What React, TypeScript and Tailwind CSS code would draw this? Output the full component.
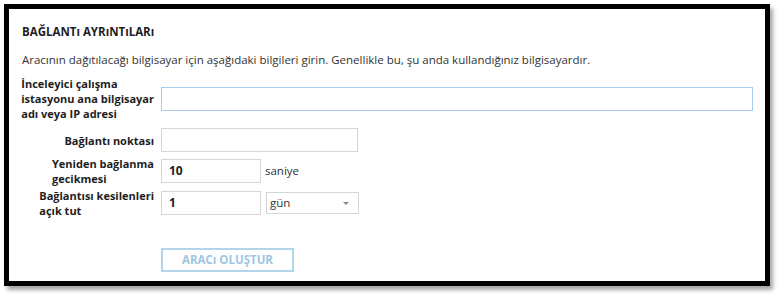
import React from 'react';

const labelCls = 'whitespace-nowrap text-[11px] font-bold leading-[15px] text-[#1e1e1e]';

function Label({ lines }: { lines: string[] }) {
  return (
    <div className="flex w-[133px] shrink-0 justify-end pr-[1px]">
      <div className={labelCls}>
        {lines.map((l) => (
          <div key={l}>{l}</div>
        ))}
      </div>
    </div>
  );
}

function TextBox({ value, className }: { value?: string; className: string }) {
  return (
    <div
      className={`flex h-[24px] items-center border bg-white px-[7px] text-[12px] font-bold text-[#1e1e1e] ${className}`}
    >
      {value}
    </div>
  );
}

export default function App() {
  return (
    <div className="h-[298px] w-[781px] bg-white pl-[4px] pt-[4px] font-['Open_Sans','Noto_Sans',sans-serif]">
      <div className="h-[282px] w-[766px] border-[5px] border-black bg-white pl-[13px] pt-[15px] shadow-[3px_4px_4px_rgba(0,0,0,0.35)]">
        <h2 className="text-[11.5px] font-bold leading-[15px] text-[#1e1e1e]">BAĞLANTı AYRıNTıLARı</h2>
        <p className="mt-[13px] text-[11.5px] leading-[15px] text-[#333]">
          Aracının dağıtılacağı bilgisayar için aşağıdaki bilgileri girin. Genellikle bu, şu anda kullandığınız
          bilgisayardır.
        </p>

        <div className="mt-[9px] flex items-center gap-[6px]">
          <Label lines={['İnceleyici çalışma', 'istasyonu ana bilgisayar', 'adı veya IP adresi']} />
          <TextBox className="w-[592px] border-[#a9cdf0]" />
        </div>

        <div className="mt-[7px] flex items-center gap-[6px]">
          <Label lines={['Bağlantı noktası']} />
          <TextBox className="w-[197px] border-[#d6d6d6]" />
        </div>

        <div className="mt-[4px] flex items-center gap-[6px]">
          <Label lines={['Yeniden bağlanma', 'gecikmesi']} />
          <TextBox value="10" className="w-[100px] border-[#d6d6d6]" />
          <span className="ml-[-2px] text-[11.5px] text-[#333]">saniye</span>
        </div>

        <div className="mt-[2px] flex items-center gap-[6px]">
          <Label lines={['Bağlantısı kesilenleri', 'açık tut']} />
          <TextBox value="1" className="w-[100px] border-[#d6d6d6]" />
          <div className="ml-[-1px] flex h-[22px] w-[93px] items-center justify-between border border-[#d6d6d6] bg-white pl-[3px] pr-[9px] text-[11.5px] text-[#333]">
            <span>gün</span>
            <span className="h-0 w-0 border-x-[3px] border-t-[3px] border-x-transparent border-t-[#888]" />
          </div>
        </div>

        <button className="ml-[139px] mt-[30px] h-[24px] w-[133px] border-2 border-[#b3d5ec] bg-white text-[11.5px] font-bold text-[#9ec6e2]">
          ARACı OLUŞTUR
        </button>
      </div>
    </div>
  );
}
